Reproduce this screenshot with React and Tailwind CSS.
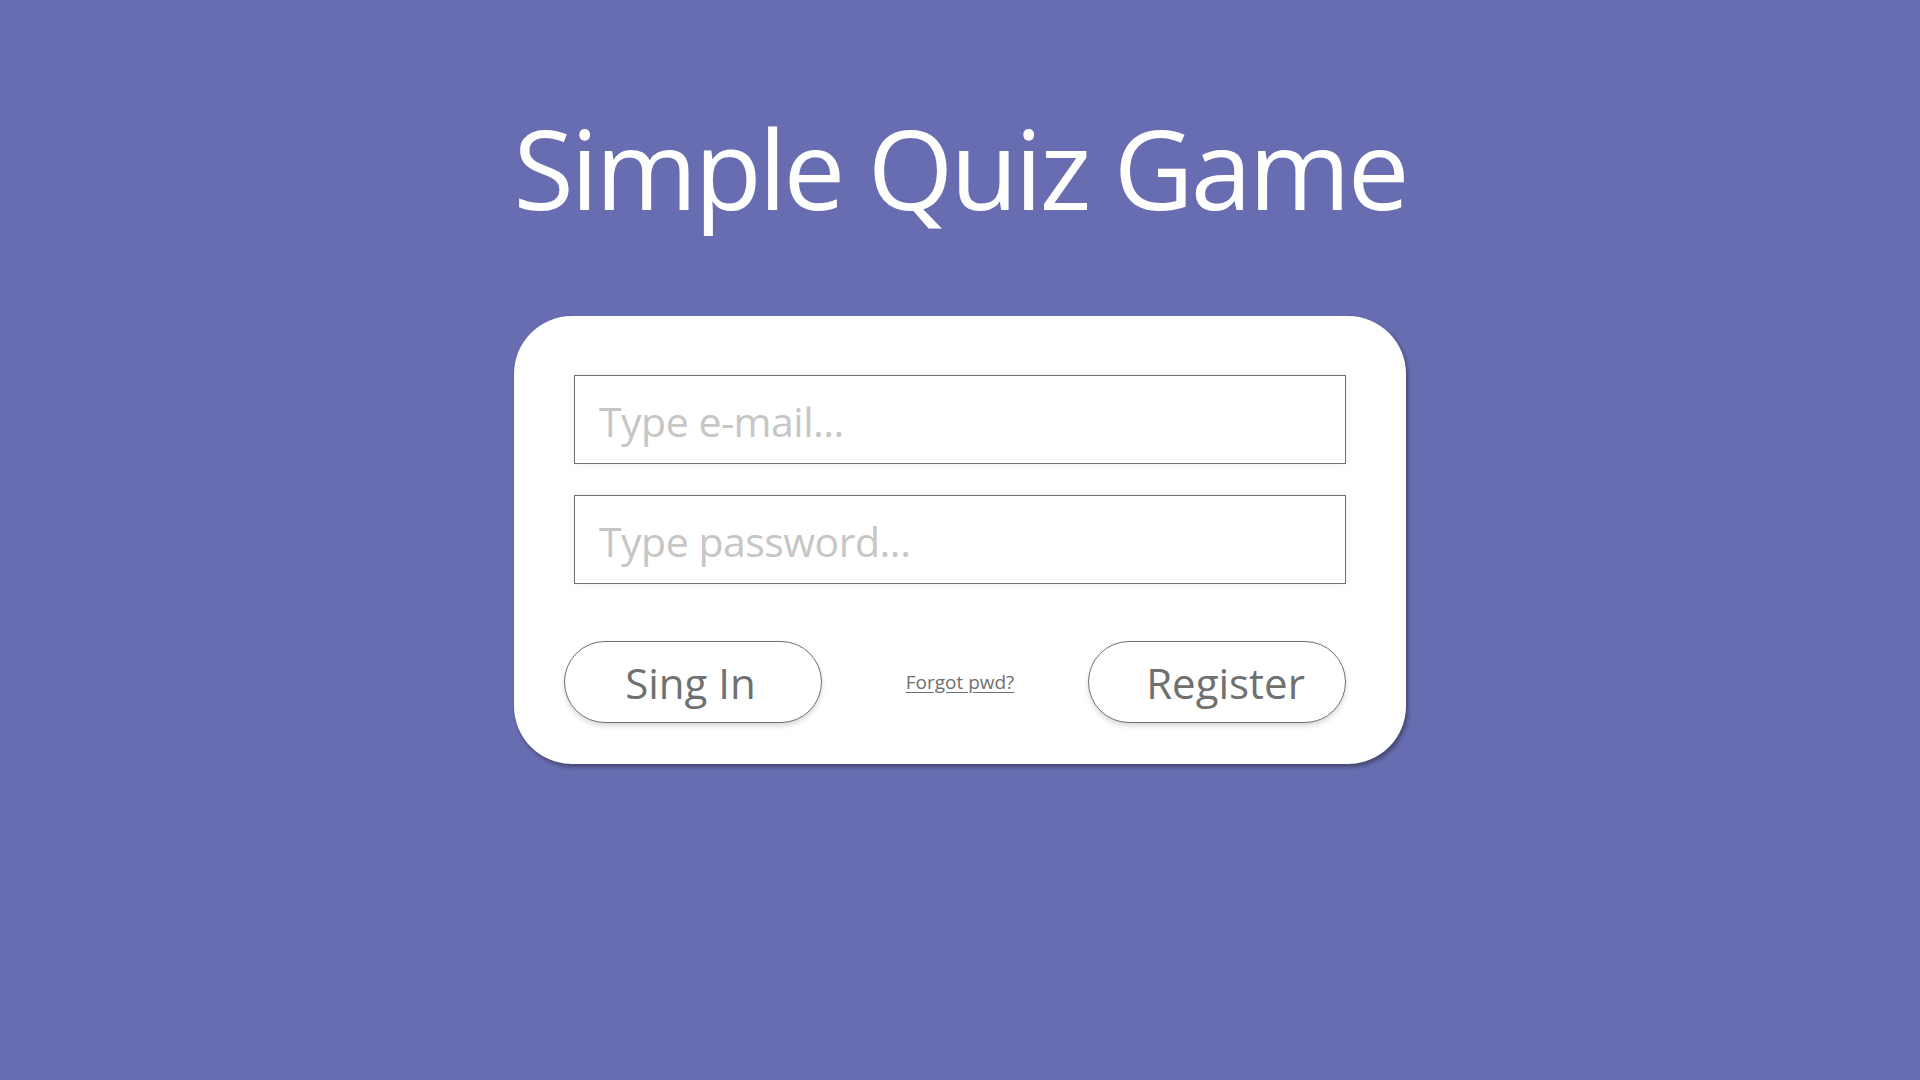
import React, { useState } from 'react';

const FONT = "font-['Open_Sans',_'Noto_Sans',_sans-serif]";

export default function App() {
  const [email, setEmail] = useState('');
  const [password, setPassword] = useState('');

  return (
    <div className={`min-h-screen w-full bg-[#676db0] flex flex-col items-center ${FONT}`}>
      <h1 className="mt-[112px] text-[110px] leading-none text-white font-normal tracking-[-3px]">
        Simple Quiz Game
      </h1>

      <div className="mt-[94px] w-[892px] rounded-[58px] bg-white px-[60px] pt-[59px] pb-[41px] shadow-[2px_3px_4px_rgba(0,0,0,0.35)]">
        <input
          type="email"
          value={email}
          onChange={(e) => setEmail(e.target.value)}
          placeholder="Type e-mail..."
          className="block w-full h-[89px] border border-[#707070] bg-white px-[24px] pt-[3px] text-[41px] tracking-[-0.5px] text-[#555] placeholder:text-[#c6c6c6] outline-none shadow-[0_0_8px_rgba(0,0,0,0.07)]"
        />
        <input
          type="password"
          value={password}
          onChange={(e) => setPassword(e.target.value)}
          placeholder="Type password..."
          className="mt-[31px] block w-full h-[89px] border border-[#707070] bg-white px-[24px] pt-[3px] text-[41px] tracking-[-0.5px] text-[#555] placeholder:text-[#c6c6c6] outline-none shadow-[0_0_8px_rgba(0,0,0,0.07)]"
        />

        {/* Actions */}
        <div className="mt-[57px] -ml-[10px] flex items-center justify-between">
          <button className="w-[258px] h-[82px] rounded-full border border-[#707070] bg-white pr-[5px] text-[42px] text-[#707070] shadow-[0_3px_5px_rgba(0,0,0,0.15)]">
            Sing In
          </button>
          <a href="#" className="ml-[10px] text-[19px] text-[#707070] underline underline-offset-[3px]">
            Forgot pwd?
          </a>
          <button className="w-[258px] h-[82px] rounded-full border border-[#707070] bg-white pl-[17px] text-[42px] text-[#707070] shadow-[0_3px_5px_rgba(0,0,0,0.15)]">
            Register
          </button>
        </div>
      </div>
    </div>
  );
}
